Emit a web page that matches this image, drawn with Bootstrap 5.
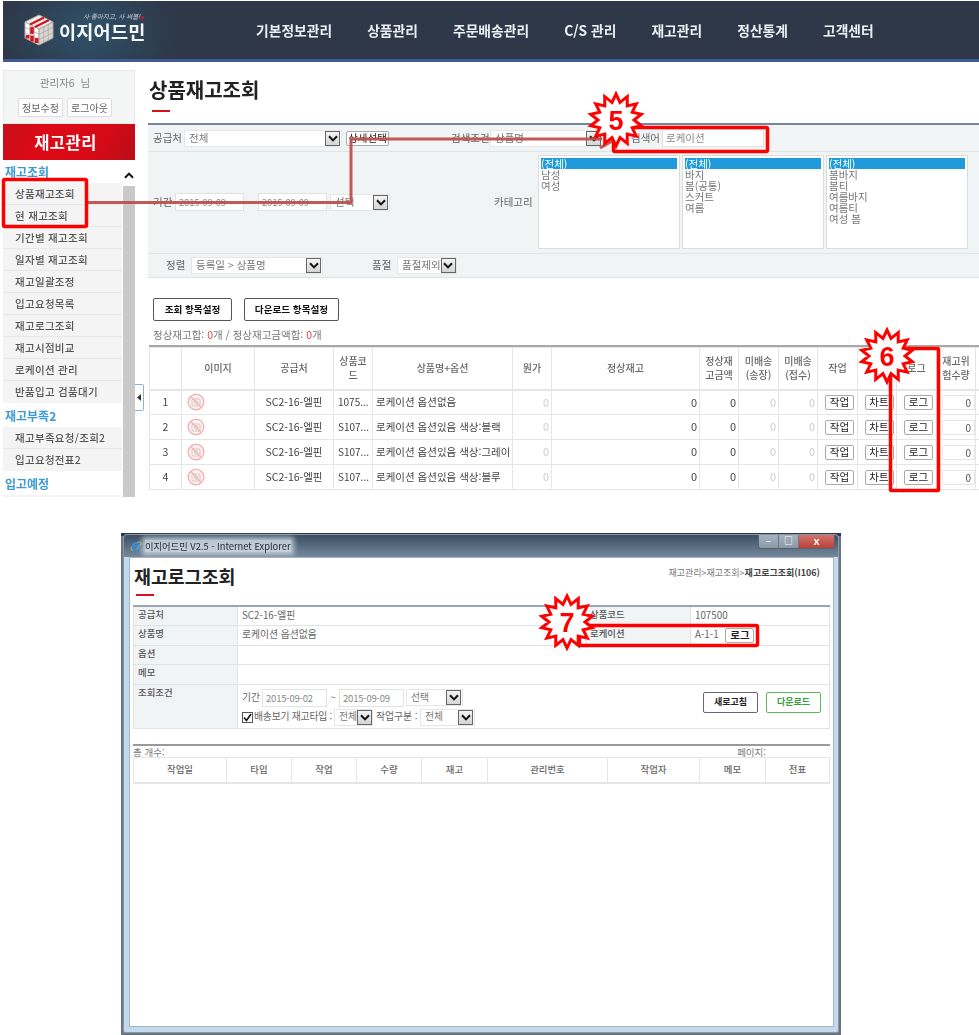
<!DOCTYPE html>
<html lang="ko">
<head>
<meta charset="UTF-8">
<title>이지어드민 재고로그조회 안내</title>
<link href="https://cdn.jsdelivr.net/npm/bootstrap@5.3.2/dist/css/bootstrap.min.css" rel="stylesheet">
<style>
    body { margin: 0; background: #fff; font-family: "Noto Sans CJK KR", "Liberation Sans", sans-serif; font-size: 10.5px; color: #555; line-height: 1.2; }
    .sheet { position: relative; width: 979px; height: 1035px; overflow: hidden; filter: blur(.3px); }

    /* first screenshot */
    .shot-main { margin: 1px 0 0 3px; height: 496px; overflow: hidden; position: relative; }
    .top-head { height: 61px; background: radial-gradient(ellipse 90px 60px at 85px 30px, #2f5169 0, #2e3849 100%); border-bottom: 3px solid #3f5a94; }
    .logo-wrap { width: 250px; padding: 0 0 6px 20px; }
    .logo-cube { margin-top: 6px; flex: none; }
    .logo-text { color: #f4f6f8; font-size: 18.6px; font-weight: 700; line-height: 22px; letter-spacing: .2px; }
    .logo-sub { color: #c9ced4; font-size: 6.5px; font-style: italic; margin-left: 24px; line-height: 8px; white-space: nowrap; }
    .logo-dot { display: inline-block; width: 3px; height: 3px; border-radius: 50%; background: #e01020; margin-left: 1px; }
    .top-menu { gap: 35px; margin-left: 3px; }
    .top-menu a { color: #eceef1; font-size: 13.8px; font-weight: 700; text-decoration: none; white-space: nowrap; }

    .side-bar { width: 132px; flex: none; }
    .user-box { height: 54px; background: #f4f5f5; border: 1px solid #e8e8e8; text-align: center; padding: 6px 8px 0 0; color: #888; }
    .user-btn { font-size: 10px; padding: 0; width: 45px; height: 19px; line-height: 17px; background: #fff; border: 1px solid #ddd; border-radius: 2px; color: #666; }
    .red-title { height: 36px; background: linear-gradient(115deg, #c80f1c 0, #dc0a16 30%, #d80a16 70%, #b90d1a 100%); color: #fff; font-size: 16.5px; font-weight: 700; letter-spacing: .5px; line-height: 36px; text-align: center; padding-right: 7px; }
    .side-list { width: 119px; flex: none; }
    .side-head { color: #3a9ad6; font-size: 12px; font-weight: 700; padding-left: 2px; height: 23px; line-height: 23px; }
    .side-head.tall { height: 24px; line-height: 26px; }
    .side-list .list-group-item { height: 22px; line-height: 21px; padding: 0 0 0 12px; background: #f4f4f4; border-color: #e8e8e8; color: #555; font-size: 10.5px; font-weight: 500; letter-spacing: .3px; white-space: nowrap; }
    .side-scroll { width: 12px; background: #c9c9c9; margin-left: 1px; }
    .scroll-up { height: 26px; background: #fff; display: flex; align-items: center; justify-content: center; padding-top: 5px; }
    .scroll-up svg { transform: rotate(180deg); }
    .side-pull { position: absolute; left: 132px; top: 383px; width: 9px; height: 27px; background: #fff; border: 1px solid #8fb2d0; border-left: 0; border-radius: 0 2px 2px 0; display: flex; align-items: center; justify-content: center; }

    .main-area { margin-left: 13px; width: 840px; flex: none; }
    .page-title { font-size: 20px; font-weight: 700; color: #222; line-height: 24px; margin: 8px 0 0 1px; }
    .title-rule { width: 18px; height: 2px; background: #d8101c; margin: 8px 0 11px 4px; }
    .search-panel { background: #f1f4f5; border-top: 2px solid #75859a; }
    .search-row { display: flex; align-items: center; }
    .row-a { height: 27px; border-bottom: 1px solid #dfe3e5; }
    .row-b { height: 97px; padding-top: 3px; }
    .row-c { height: 25px; margin-top: 4px; border-top: 1px solid #e2e5e7; border-bottom: 1px solid #dfe3e5; }
    .fld-label { color: #666; white-space: nowrap; flex: none; }
    .sel-box { display: flex; align-items: center; justify-content: space-between; height: 17px; background: #fff; border: 1px solid #e6e6e6; padding: 0 1px 0 4px; color: #777; flex: none; white-space: nowrap; }
    .sel-arrow { width: 15px; height: 15px; background: linear-gradient(#f4f4f4, #d4d4d4); border: 1px solid #666; display: flex; align-items: center; justify-content: center; flex: none; }
    .text-fld { height: 18px; background: #fff; border: 1px solid #e2e2e2; padding: 0 3px; line-height: 16px; font-size: 9.5px; letter-spacing: -.2px; color: #888; flex: none; white-space: nowrap; }
    .mini-btn { font-size: 10.5px; height: 15px; padding: 0; line-height: 12px; width: 29px; color: #222; background: #fff; border: 1px solid #aaa; border-radius: 2px; }
    .list-box { width: 142px; height: 94px; background: #fff; border: 1px solid #dcdcdc; padding: 2px; line-height: 11px; color: #777; font-size: 10.5px; flex: none; margin-right: 2px; }
    .list-box .on { background: #1f9bdc; color: #fff; display: block; }
    .set-btn { font-size: 9.6px; font-weight: 700; color: #111; height: 23px; padding: 0; background: #fff; border: 1px solid #555; border-radius: 2px; }
    .sum-line { color: #777; margin: 8px 0 4px 5px; height: 12px; line-height: 12px; }
    .sum-line b { color: #e8414a; font-weight: 400; }

    .stock-wrap { width: 831px; overflow: hidden; margin-left: 1px; border-top: 2px solid #a8a8a8; }
    .stock-grid { table-layout: fixed; width: 860px; --bs-border-color: #e6e6e6; font-size: 10.5px; }
    .stock-grid th, .stock-grid td { padding: 0 3px; vertical-align: middle; color: #444; font-weight: 400; white-space: nowrap; overflow: hidden; }
    .stock-grid thead th { height: 42px; text-align: center; font-size: 10px; color: #666; font-weight: 500; white-space: normal; line-height: 14px; border-bottom-width: 2px; padding: 0 2px; }
    .stock-grid tbody td { height: 25px; }
    .stock-grid .num { text-align: right; font-size: 11px; padding-right: 2px; }
    .stock-grid .faint { color: #ccc; }
    .stock-grid .mid { text-align: center; }
    .stock-grid .act { padding: 0 0 0 4px; text-align: center; }
    .qty-fld { display: block; height: 15px; width: 33px; margin-left: 5px; border: 1px solid #e6e6e6; text-align: right; padding-right: 3px; font-size: 10px; line-height: 14px; color: #555; }

    /* second screenshot */
    .win-back { margin: 36px 0 0 121px; width: 720px; height: 502px; background: linear-gradient(#2e3849 3px, #6b7580 3px); padding: 1px 2px 2px; }
    .win-frame { height: 100%; background: #c3d9ee; border: 1px solid #8a98a6; border-radius: 4px 4px 2px 2px; padding: 0 4px 5px 5px; display: flex; flex-direction: column; }
    .win-title { height: 22px; flex: none; margin: 0 -4px 0 -5px; padding-left: 6px; display: flex; align-items: center; border-radius: 3px 3px 0 0; background: linear-gradient(#3a4d63, #76899c); }
    .win-title span { font-size: 9.3px; color: #1e2933; margin-left: 3px; background: rgba(225, 235, 242, .75); box-shadow: 0 0 5px 3px rgba(225, 235, 242, .7); line-height: 12px; white-space: nowrap; }
    .win-keys { margin-left: auto; margin-right: 3px; margin-top: -8px; display: flex; height: 14px; border: 1px solid #56636f; border-top: 0; border-radius: 0 0 3px 3px; overflow: hidden; }
    .win-keys i { display: flex; align-items: center; justify-content: center; width: 20px; background: linear-gradient(#a6b2be, #8a98a6); color: #fff; font-style: normal; font-size: 9px; font-weight: 700; border-right: 1px solid #6c7987; }
    .win-keys i:last-child { width: 35px; background: linear-gradient(#d2736b, #b8423a); border: 0; font-family: "Liberation Sans", sans-serif; font-size: 11px; }
    .win-body { flex: 1; background: #fff; border: 1px solid #aab4bd; padding: 0 3px; }
    .pop-head { height: 47px; }
    .pop-title { font-size: 18.4px; font-weight: 700; color: #222; line-height: 22px; margin: 7px 0 0 1px; }
    .pop-rule { width: 18px; height: 2px; background: #d8101c; margin: 7px 0 0 3px; }
    .crumb { font-size: 9px; margin: 10px 10px 0 0; color: #777; white-space: nowrap; }
    .crumb b { color: #444; font-weight: 700; }
    .info-sheet { width: 697px; margin-bottom: 15px; --bs-border-color: #e0e3e5; border-top: 2px solid #9aa6b2; table-layout: fixed; }
    .info-sheet th, .info-sheet td { padding: 0 4px; height: 19.5px; font-size: 9.8px; font-weight: 400; color: #666; vertical-align: middle; }
    .info-sheet th { background: #f1f4f5; font-size: 9.4px; font-weight: 500; vertical-align: top; padding-top: 2px; color: #555; }
    .cond-btn { font-size: 9px; font-weight: 700; height: 21px; width: 55px; padding: 0; background: #fff; border: 1px solid #667; border-radius: 2px; color: #222; }
    .cond-btn.grn { border-color: #5cb85c; color: #3c9c3c; }
    .tick-box { width: 11px; height: 11px; border: 1px solid #555; background: #fff; display: inline-flex; align-items: center; justify-content: center; flex: none; }
    .log-head { border-top: 2px solid #9a9a9a; width: 697px; height: 13px; line-height: 13px; font-size: 9.5px; color: #777; padding-right: 64px; }
    .log-grid { width: 697px; table-layout: fixed; --bs-border-color: #e6e6e6; }
    .log-grid th { height: 26px; padding: 0; text-align: center; font-size: 9.4px; font-weight: 500; color: #666; vertical-align: middle; border-bottom-width: 2px; }

    .mark-layer { position: absolute; left: 0; top: 0; width: 979px; height: 1035px; pointer-events: none; }
    .mark-layer text { font-family: "Liberation Sans", sans-serif; font-weight: 700; font-size: 27px; fill: #f00; text-anchor: middle; }
</style>
</head>
<body>
<svg width="0" height="0" class="position-absolute">
    <symbol id="chev" viewBox="0 0 10 7"><path d="M1 1.2 5 5.4 9 1.2" fill="none" stroke="#111" stroke-width="2"/></symbol>
    <symbol id="noimg" viewBox="0 0 18 18">
        <circle cx="9" cy="9" r="7.8" fill="#fdf1f1" stroke="#f2b6b6" stroke-width="1.5"/>
        <rect x="5" y="6" width="8" height="7" rx="1" fill="none" stroke="#d2c8c8"/>
        <circle cx="9" cy="9.5" r="1.8" fill="none" stroke="#d2c8c8"/>
        <path d="M4 3.8 14 14.2" stroke="#f2b6b6" stroke-width="1.4"/>
    </symbol>
</svg>

<div class="sheet">
    <div class="shot-main">
        <header class="top-head d-flex align-items-center">
            <div class="logo-wrap d-flex align-items-center">
                <svg width="32" height="32" viewBox="0 0 32 32" class="logo-cube">
                    <polygon points="16,1 30,8 16,15 2,8" fill="#f3eee8" stroke="#b5aea6"/>
                    <polygon points="2,8 16,15 16,31 2,24" fill="#fff" stroke="#b5aea6"/>
                    <polygon points="30,8 16,15 16,31 30,24" fill="#d9d6d2" stroke="#a9a39c"/>
                    <path d="M6.7 10.3v16M11.3 12.7v16M20.700 12.700v16M25.300 10.300v16M2 13.300 16 20.300 30 13.300M2 18.700 16 25.700 30 18.700" stroke="#a9a39c" stroke-width=".7" fill="none"/>
                    <path d="M7 10.500 21 3.500M12 13 26 6" stroke="#cf1a24" stroke-width="2.400"/>
                    <path d="M9 13v7M9 21.500v6M4.500 21v3.500M13.600 24v5" stroke="#cf1a24" stroke-width="3.600"/>
                </svg>
                <div class="ms-1">
                    <div class="logo-sub">사 좋아지고, 사 써볼!<span class="logo-dot"></span></div>
                    <div class="logo-text">이지어드민</div>
                </div>
            </div>
            <nav class="top-menu d-flex">
                <a href="#">기본정보관리</a>
                <a href="#">상품관리</a>
                <a href="#">주문배송관리</a>
                <a href="#">C/S 관리</a>
                <a href="#">재고관리</a>
                <a href="#">정산통계</a>
                <a href="#">고객센터</a>
            </nav>
        </header>

        <div class="d-flex mt-2 pt-0">
            <aside class="side-bar">
                <div class="user-box">
                    <div class="mb-2">관리자6 &nbsp;님</div>
                    <div class="d-flex justify-content-center gap-1">
                        <button class="btn user-btn">정보수정</button>
                        <button class="btn user-btn">로그아웃</button>
                    </div>
                </div>
                <div class="red-title">재고관리</div>
                <div class="d-flex">
                    <div class="side-list">
                        <div class="side-head">재고조회</div>
                        <div class="list-group list-group-flush">
                            <a class="list-group-item">상품재고조회</a>
                            <a class="list-group-item">현 재고조회</a>
                            <a class="list-group-item">기간별 재고조회</a>
                            <a class="list-group-item">일자별 재고조회</a>
                            <a class="list-group-item">재고일괄조정</a>
                            <a class="list-group-item">입고요청목록</a>
                            <a class="list-group-item">재고로그조회</a>
                            <a class="list-group-item">재고시점비교</a>
                            <a class="list-group-item">로케이션 관리</a>
                            <a class="list-group-item">반품입고 검품대기</a>
                        </div>
                        <div class="side-head tall">재고부족2</div>
                        <div class="list-group list-group-flush">
                            <a class="list-group-item">재고부족요청/조회2</a>
                            <a class="list-group-item">입고요청전표2</a>
                        </div>
                        <div class="side-head tall">입고예정</div>
                        <div class="list-group list-group-flush">
                            <a class="list-group-item"></a>
                        </div>
                    </div>
                    <div class="side-scroll">
                        <div class="scroll-up"><svg width="10" height="7"><use href="#chev"/></svg></div>
                    </div>
                </div>
            </aside>
            <div class="side-pull"><svg width="4" height="7" viewBox="0 0 4 7"><path d="M4 0 0 3.500 4 7z" fill="#333"/></svg></div>

            <main class="main-area">
                <h1 class="page-title">상품재고조회</h1>
                <div class="title-rule"></div>

                <div class="search-panel">
                    <div class="search-row row-a">
                        <span class="fld-label" style="margin-left:5px;width:31px">공급처</span>
                        <div class="sel-box" style="width:158px">전체 <span class="sel-arrow"><svg width="10" height="7"><use href="#chev"/></svg></span></div>
                        <button class="btn mini-btn" style="width:43px;margin-left:4px">상세선택</button>
                        <span class="fld-label" style="margin-left:62px;width:39px">검색조건</span>
                        <div class="sel-box" style="width:113px">상품명 <span class="sel-arrow"><svg width="10" height="7"><use href="#chev"/></svg></span></div>
                        <span class="fld-label" style="margin-left:28px;width:31px">검색어</span>
                        <div class="text-fld" style="width:102px;font-size:10.5px;letter-spacing:0">로케이션</div>
                    </div>
                    <div class="search-row row-b">
                        <span class="fld-label" style="margin-left:5px;width:22px">기간</span>
                        <div class="text-fld" style="width:69px">2015-09-09</div>
                        <span class="fld-label text-center" style="width:14px">~</span>
                        <div class="text-fld" style="width:69px">2015-09-09</div>
                        <div class="sel-box" style="width:60px;margin-left:3px">선택 <span class="sel-arrow"><svg width="10" height="7"><use href="#chev"/></svg></span></div>
                        <span class="fld-label" style="margin-left:104px;width:44px">카테고리</span>
                        <div class="list-box"><span class="on">(전체)</span>남성<br>여성</div>
                        <div class="list-box"><span class="on">(전체)</span>바지<br>봄(공통)<br>스커트<br>여름</div>
                        <div class="list-box"><span class="on">(전체)</span>봄바지<br>봄티<br>여름바지<br>여름티<br>여성 봄</div>
                    </div>
                    <div class="search-row row-c">
                        <span class="fld-label" style="margin-left:18px;width:25px">정렬</span>
                        <div class="sel-box" style="width:132px">등록일 &gt; 상품명 <span class="sel-arrow"><svg width="10" height="7"><use href="#chev"/></svg></span></div>
                        <span class="fld-label" style="margin-left:49px;width:25px">품절</span>
                        <div class="sel-box" style="width:60px">품절제외 <span class="sel-arrow"><svg width="10" height="7"><use href="#chev"/></svg></span></div>
                    </div>
                </div>

                <div class="d-flex" style="gap:12px;margin:20px 0 0 5px">
                    <button class="btn set-btn" style="width:79px">조회 항목설정</button>
                    <button class="btn set-btn" style="width:95px">다운로드 항목설정</button>
                </div>
                <div class="sum-line">정상재고합: <b>0</b>개 / 정상재고금액합: <b>0</b>개</div>

                <div class="stock-wrap">
                    <table class="table table-bordered mb-0 stock-grid">
                        <colgroup>
                            <col style="width:32px"><col style="width:73px"><col style="width:79px"><col style="width:39px"><col style="width:140px"><col style="width:39px"><col style="width:148px"><col style="width:39px"><col style="width:40px"><col style="width:39px"><col style="width:40px"><col style="width:39px"><col style="width:40px"><col style="width:39px"><col style="width:34px">
                        </colgroup>
                        <thead>
                            <tr><th></th><th>이미지</th><th>공급처</th><th>상품코드</th><th>상품명+옵션</th><th>원가</th><th>정상재고</th><th>정상재<br>고금액</th><th>미배송<br>(송장)</th><th>미배송<br>(접수)</th><th>작업</th><th>차트</th><th>로그</th><th>재고위<br>험수량</th><th></th></tr>
                        </thead>
                        <tbody id="stockRows"></tbody>
                    </table>
                </div>
            </main>
        </div>
    </div>

    <div class="win-back">
        <div class="win-frame">
            <div class="win-title">
                <svg width="12" height="12" viewBox="0 0 12 12"><ellipse cx="6" cy="6" rx="6" ry="2.600" transform="rotate(-35 6 6)" fill="none" stroke="#e7b43a" stroke-width=".8"/><path d="M3 6.300H9.400A3.400 3.400 0 1 0 8.800 8.400" fill="none" stroke="#2f8fd8" stroke-width="1.900"/></svg>
                <span>이지어드민 V2.5 - Internet Explorer</span>
                <div class="win-keys"><i>&#8211;</i><i>&#9633;</i><i>x</i></div>
            </div>
            <div class="win-body">
                <div class="pop-head d-flex justify-content-between">
                    <div>
                        <div class="pop-title">재고로그조회</div>
                        <div class="pop-rule"></div>
                    </div>
                    <div class="crumb">재고관리&gt;재고조회&gt;<b>재고로그조회(I106)</b></div>
                </div>
                <table class="table table-bordered info-sheet">
                    <colgroup><col style="width:104px"><col style="width:348px"><col style="width:105px"><col></colgroup>
                    <tr><th>공급처</th><td>SC2-16-엘핀</td><th>상품코드</th><td>107500</td></tr>
                    <tr><th>상품명</th><td>로케이션 옵션없음</td><th>로케이션</th><td>A-1-1 <button class="btn mini-btn ms-1 fw-bold">로그</button></td></tr>
                    <tr><th>옵션</th><td colspan="3"></td></tr>
                    <tr><th>메모</th><td colspan="3"></td></tr>
                    <tr>
                        <th>조회조건</th>
                        <td colspan="3" class="p-0">
                            <div class="d-flex justify-content-between" style="height:43px;padding:4px 8px 0 4px">
                                <div>
                                    <div class="d-flex align-items-center">
                                        <span style="width:20px">기간</span>
                                        <div class="text-fld" style="width:65px">2015-09-02</div>
                                        <span class="text-center" style="width:12px">~</span>
                                        <div class="text-fld" style="width:65px">2015-09-09</div>
                                        <div class="sel-box" style="width:57px;margin-left:2px">선택 <span class="sel-arrow"><svg width="10" height="7"><use href="#chev"/></svg></span></div>
                                    </div>
                                    <div class="d-flex align-items-center" style="margin-top:2px">
                                        <span class="tick-box"><svg width="9" height="9" viewBox="0 0 9 9"><path d="M1 4.500 3.500 7.500 8 1" fill="none" stroke="#111" stroke-width="1.600"/></svg></span>
                                        <span style="width:81px;padding-left:1px;white-space:nowrap;letter-spacing:-.2px">배송보기 재고타입 :</span>
                                        <div class="sel-box" style="width:39px">전체<span class="sel-arrow"><svg width="10" height="7"><use href="#chev"/></svg></span></div>
                                        <span style="width:47px;padding-left:3px;white-space:nowrap">작업구분 :</span>
                                        <div class="sel-box" style="width:55px">전체 <span class="sel-arrow"><svg width="10" height="7"><use href="#chev"/></svg></span></div>
                                    </div>
                                </div>
                                <div class="d-flex" style="gap:8px;margin-top:3px;height:21px">
                                    <button class="btn cond-btn">새로고침</button>
                                    <button class="btn cond-btn grn">다운로드</button>
                                </div>
                            </div>
                        </td>
                    </tr>
                </table>
                <div class="log-head d-flex justify-content-between"><span>총 개수:</span><span>페이지:</span></div>
                <table class="table table-bordered log-grid mb-0">
                    <colgroup><col style="width:93px"><col style="width:65px"><col style="width:65px"><col style="width:65px"><col style="width:66px"><col style="width:120px"><col style="width:92px"><col style="width:66px"><col></colgroup>
                    <thead><tr><th>작업일</th><th>타입</th><th>작업</th><th>수량</th><th>재고</th><th>관리번호</th><th>작업자</th><th>메모</th><th>전표</th></tr></thead>
                </table>
            </div>
        </div>
    </div>

    <svg class="mark-layer" viewBox="0 0 979 1035">
        <g fill="none" stroke="#c0504d" stroke-width="3" opacity=".95">
            <polyline points="88,202.500 351,202.500 351,139 602,139"/>
            <line x1="600" y1="148" x2="614" y2="140"/>
        </g>
        <g fill="none" stroke="#f00" stroke-width="3.500">
            <rect x="3.500" y="179.500" width="83" height="47" rx="1.500"/>
            <rect x="613.500" y="127.500" width="154" height="24" rx="1.500"/>
            <rect x="890.500" y="348.500" width="48" height="142" rx="1"/>
            <rect x="579.500" y="625.500" width="178" height="20" rx="1.500"/>
        </g>
        <g id="stars"></g>
    </svg>
</div>

<script>
    var rows = [
        ['1075...', '로케이션 옵션없음'],
        ['S107...', '로케이션 옵션있음 색상:블랙'],
        ['S107...', '로케이션 옵션있음 색상:그레이'],
        ['S107...', '로케이션 옵션있음 색상:블루']
    ];
    var html = '';
    rows.forEach(function (r, i) {
        html += '<tr><td class="mid">' + (i + 1) + '</td>' +
            '<td><svg width="18" height="18" style="margin-left:2px"><use href="#noimg"/></svg></td>' +
            '<td class="mid">SC2-16-엘핀</td><td class="px-1" style="font-size:10px">' + r[0] + '</td><td>' + r[1] + '</td>' +
            '<td class="num faint">0</td><td class="num">0</td><td class="num">0</td><td class="num faint">0</td><td class="num faint">0</td>' +
            '<td class="act"><button class="btn mini-btn">작업</button></td>' +
            '<td class="act"><button class="btn mini-btn">차트</button></td>' +
            '<td class="act"><button class="btn mini-btn">로그</button></td>' +
            '<td class="p-0"><span class="qty-fld">0</span></td><td></td></tr>';
    });
    document.getElementById('stockRows').innerHTML = html;

    // burst stars with the step numbers
    var stars = [[616, 120, '5'], [887, 356, '6'], [567, 622, '7']];
    var out = '';
    stars.forEach(function (s) {
        var pts = [];
        for (var k = 0; k < 28; k++) {
            var rad = k % 2 ? 18 : 26;
            var a = Math.PI * k / 14 - Math.PI / 2;
            pts.push((s[0] + rad * Math.cos(a)).toFixed(1) + ',' + (s[1] + rad * Math.sin(a)).toFixed(1));
        }
        out += '<polygon points="' + pts.join(' ') + '" fill="#fff" stroke="#f00" stroke-width="3"/>';
        out += '<text x="' + s[0] + '" y="' + (s[1] + 10) + '">' + s[2] + '</text>';
    });
    document.getElementById('stars').innerHTML = out;
</script>
<script src="https://cdn.jsdelivr.net/npm/bootstrap@5.3.2/dist/js/bootstrap.bundle.min.js"></script>
</body>
</html>
